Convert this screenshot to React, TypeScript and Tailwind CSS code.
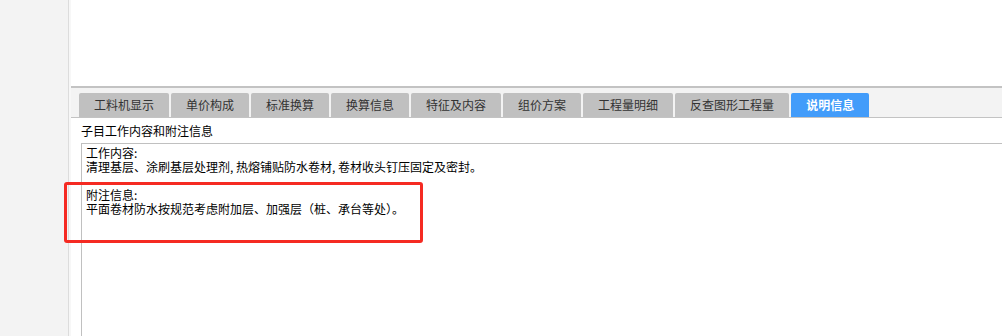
import React from "react";

const tabs = [
  "工料机显示",
  "单价构成",
  "标准换算",
  "换算信息",
  "特征及内容",
  "组价方案",
  "工程量明细",
  "反查图形工程量",
  "说明信息",
];

export default function App() {
  const active = "说明信息";

  return (
    <div
      className="relative flex w-[1002px] h-[336px] overflow-hidden bg-white text-[12px] text-black"
      style={{ fontFamily: '"Noto Sans CJK SC", "Noto Sans", sans-serif' }}
    >
      {/* left side panel */}
      <div className="w-[69px] shrink-0 bg-[#f3f3f3] border-r border-[#dcdcdc]" />
      <div className="w-[2px] shrink-0 bg-[#f7f7f7]" />

      {/* main area */}
      <div className="flex flex-col flex-1 min-w-0">
        <div className="h-[86px] shrink-0 bg-white" />
        <div className="h-[2px] shrink-0 bg-[#c3c3c3]" />

        {/* tab strip */}
        <div className="h-[30px] shrink-0 flex items-end gap-[2px] pl-[8px] bg-[#f3f3f3] border-b border-[#c3c3c3]">
          {tabs.map((t) => (
            <div
              key={t}
              className={
                t === active
                  ? "h-[24px] px-[15px] leading-[24px] rounded-t-[2px] bg-[#429cfa] text-white font-bold whitespace-nowrap"
                  : "h-[24px] px-[15px] leading-[24px] rounded-t-[2px] bg-[#c0c0c0] text-[#333] whitespace-nowrap"
              }
            >
              {t}
            </div>
          ))}
        </div>

        {/* description panel */}
        <div className="flex flex-col flex-1 min-h-0 pl-[10px]">
          <div className="pt-[5px] leading-[16px] h-[21px]">子目工作内容和附注信息</div>
          <div className="mt-[4px] flex-1 border-l border-t border-[#c0c0c0] pl-[4px] pt-[2px] leading-[14px] whitespace-pre">
            <div>工作内容:</div>
            <div>清理基层、涂刷基层处理剂, 热熔铺贴防水卷材, 卷材收头钉压固定及密封。</div>
            <div className="h-[14px]" />
            <div>附注信息:</div>
            <div>平面卷材防水按规范考虑附加层、加强层（桩、承台等处）。</div>
          </div>
        </div>
      </div>

      {/* red annotation box */}
      <div className="absolute left-[64px] top-[182px] w-[359px] h-[61px] border-[3px] border-[#f52a22] rounded-[3px]" />
    </div>
  );
}
